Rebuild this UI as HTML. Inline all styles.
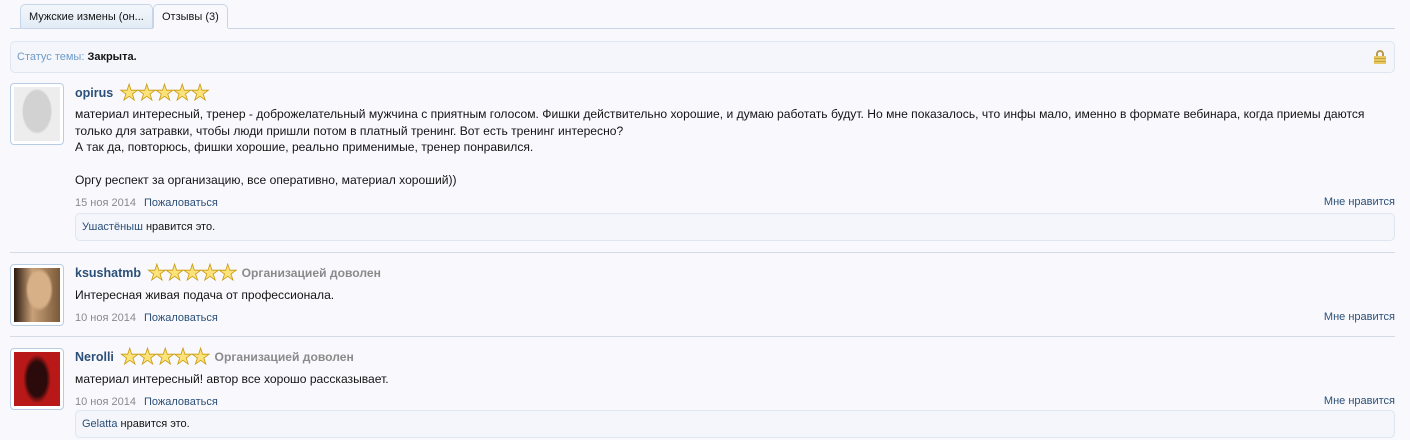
<!DOCTYPE html>
<html><head><meta charset="utf-8"><style>
body{margin:0;background:#f9f9fd;font-family:"Liberation Sans",Arial,sans-serif;font-size:12px;color:#141414;width:1410px;height:440px;overflow:hidden;position:relative}
.a{position:absolute}
.tab{position:absolute;top:4px;height:24px;border:1px solid #c6d6e8;border-bottom:none;border-radius:5px 5px 0 0;line-height:24px;font-size:11px;padding:0 8px;box-sizing:border-box}
.box{position:absolute;left:10px;width:1385px;border:1px solid #dde6f1;border-radius:5px;background:#f4f6fb;box-sizing:border-box}
.av{position:absolute;left:10px;width:54px;height:62px;border:1px solid #b8cde3;border-radius:4px;background:#fff;box-sizing:border-box;padding:3px}
.av div{width:100%;height:100%}
.name{font-weight:bold;color:#2b4f78;font-size:12.5px}
.meta{font-size:11px;color:#8a8a8a}
.meta span{color:#2b4f78;margin-left:8px}
.like{position:absolute;right:15px;font-size:11px;color:#2b4f78}
.sep{position:absolute;left:10px;width:1385px;height:1px;background:#d2dbe6}
.stars{color:#fbe27a;font-size:22px;letter-spacing:-2px;vertical-align:-3px;-webkit-text-stroke:0.8px #c99a10;margin-left:6px}
.org{color:#8a8a8a;font-weight:bold;margin-left:6px}
.t{position:absolute;left:75px;line-height:16.5px;font-size:12.1px}
</style></head><body>
<div class="tab" style="left:20px;width:133px;background:linear-gradient(#f3f7fb,#e2ebf5)">Мужские измены (он...</div>
<div class="tab" style="left:153px;width:75px;background:#f9f9fd;height:25px">Отзывы (3)</div>
<div class="a" style="left:10px;top:28px;width:1385px;height:1px;background:#c6d6e8"></div>
<div class="a" style="left:153px;top:28px;width:75px;height:1px;background:#f9f9fd"></div>

<div class="box" style="top:41px;height:32px;line-height:30px;padding-left:6px;font-size:11px"><span style="color:#6e9cc8">Статус темы:</span> <b>Закрыта.</b>
<div class="a" style="right:8px;top:8px;width:12px;height:14px"><div style="width:8px;height:6px;border:2px solid #b89b4a;border-bottom:none;border-radius:4px 4px 0 0;box-sizing:border-box;margin-left:2px"></div><div style="width:12px;height:8px;background:repeating-linear-gradient(#e8c860 0 2px,#c9a240 2px 3px)"></div></div></div>

<div class="av" style="top:83px"><div style="background:radial-gradient(ellipse 33% 42% at 50% 45%,#d2d2d2 90%,transparent 100%),#ededed"></div></div>
<div class="t" style="top:85px"><span class="name">opirus</span><span class="stars">★★★★★</span></div>
<div class="t" style="top:106px">материал интересный, тренер - доброжелательный мужчина с приятным голосом. Фишки действительно хорошие, и думаю работать будут. Но мне показалось, что инфы мало, именно в формате вебинара, когда приемы даются<br>только для затравки, чтобы люди пришли потом в платный тренинг. Вот есть тренинг интересно?<br>А так да, повторюсь, фишки хорошие, реально применимые, тренер понравился.<br><br>Оргу респект за организацию, все оперативно, материал хороший))</div>
<div class="t meta" style="top:195px;font-size:11px">15 ноя 2014<span>Пожаловаться</span></div>
<div class="like" style="top:196px">Мне нравится</div>
<div class="box" style="top:213px;height:28px;line-height:27px;padding-left:6px;font-size:11px;left:75px;width:1320px"><span style="color:#2b4f78">Ушастёныш</span> нравится это.</div>
<div class="sep" style="top:252px"></div>

<div class="av" style="top:264px"><div style="background:radial-gradient(ellipse 30% 40% at 55% 40%,#d8b088 80%,transparent 100%),linear-gradient(90deg,#2a1a10,#c8a078 40%,#7a5a3a)"></div></div>
<div class="t" style="top:265px"><span class="name">ksushatmb</span><span class="stars">★★★★★</span><span class="org">Организацией доволен</span></div>
<div class="t" style="top:287px">Интересная живая подача от профессионала.</div>
<div class="t meta" style="top:310px;font-size:11px">10 ноя 2014<span>Пожаловаться</span></div>
<div class="like" style="top:311px">Мне нравится</div>
<div class="sep" style="top:336px"></div>

<div class="av" style="top:348px"><div style="background:radial-gradient(ellipse 30% 45% at 50% 50%,#2a0a0a 70%,transparent 100%),#b81818"></div></div>
<div class="t" style="top:349px"><span class="name">Nerolli</span><span class="stars">★★★★★</span><span class="org">Организацией доволен</span></div>
<div class="t" style="top:371px">материал интересный! автор все хорошо рассказывает.</div>
<div class="t meta" style="top:394px;font-size:11px">10 ноя 2014<span>Пожаловаться</span></div>
<div class="like" style="top:395px">Мне нравится</div>
<div class="box" style="top:410px;height:28px;line-height:27px;padding-left:6px;font-size:11px;left:75px;width:1320px"><span style="color:#2b4f78">Gelatta</span> нравится это.</div>
</body></html>
